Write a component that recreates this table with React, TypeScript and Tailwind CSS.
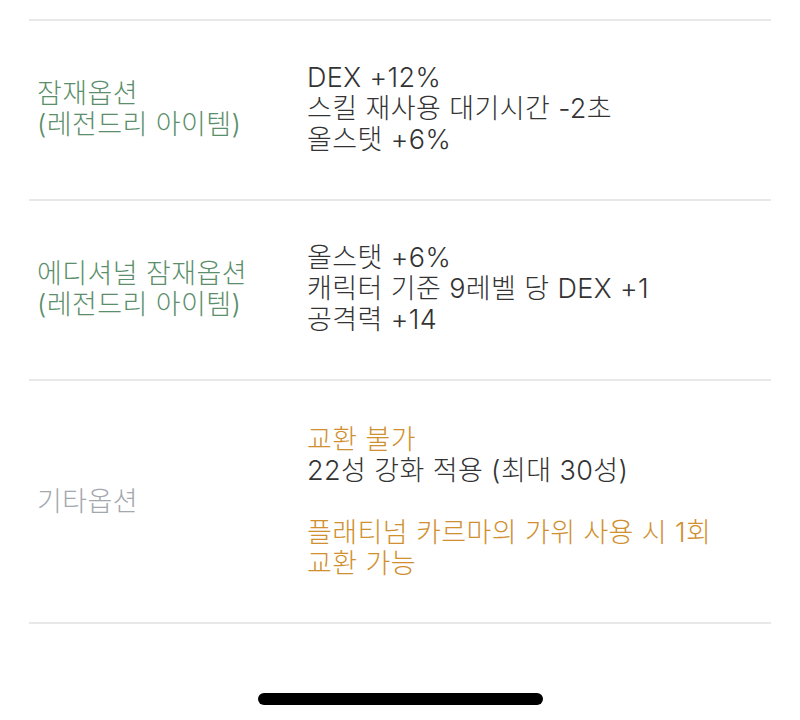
const font = {
  fontFamily: 'Inter, "Noto Sans CJK KR", sans-serif',
};

type Line = { text: string; tone?: "dark" | "gold" | "blank" };

interface Row {
  label: string[];
  labelTone: "green" | "gray";
  lines: Line[];
}

const rows: Row[] = [
  {
    label: ["잠재옵션", "(레전드리 아이템)"],
    labelTone: "green",
    lines: [
      { text: "DEX +12%" },
      { text: "스킬 재사용 대기시간 -2초" },
      { text: "올스탯 +6%" },
    ],
  },
  {
    label: ["에디셔널 잠재옵션", "(레전드리 아이템)"],
    labelTone: "green",
    lines: [
      { text: "올스탯 +6%" },
      { text: "캐릭터 기준 9레벨 당 DEX +1" },
      { text: "공격력 +14" },
    ],
  },
  {
    label: ["기타옵션"],
    labelTone: "gray",
    lines: [
      { text: "교환 불가", tone: "gold" },
      { text: "22성 강화 적용 (최대 30성)" },
      { text: "", tone: "blank" },
      { text: "플래티넘 카르마의 가위 사용 시 1회", tone: "gold" },
      { text: "교환 가능", tone: "gold" },
    ],
  },
];

export default function App() {
  return (
    <div
      className="w-[800px] h-[720px] bg-white flex flex-col text-[27px] leading-[31px] font-light tracking-[0.4px]"
      style={font}
    >
      <div className="mx-[29px] mt-[19px] border-t-2 border-[#e8e8e8]">
        {rows.map((row, i) => (
          <div
            key={i}
            className={`flex items-center border-b-2 border-[#e8e8e8] ${
              i === rows.length - 1 ? "pt-[43px] pb-[43px]" : "pt-[41px] pb-[44px]"
            }`}
          >
            <div
              className={`w-[278px] pl-2 ${
                row.labelTone === "green" ? "text-[#5b8f6b]" : "text-[#a3a7ae]"
              }`}
            >
              {row.label.map((l) => (
                <div key={l}>{l}</div>
              ))}
            </div>
            <div className="flex-1">
              {row.lines.map((line, j) =>
                line.tone === "blank" ? (
                  <div key={j} className="h-[31px]" />
                ) : (
                  <div
                    key={j}
                    className={
                      line.tone === "gold" ? "text-[#d0902f]" : "text-[#333333]"
                    }
                  >
                    {line.text}
                  </div>
                )
              )}
            </div>
          </div>
        ))}
      </div>
      <div className="flex-1 flex items-end justify-center pb-[15px]">
        <div className="w-[285px] h-[12px] rounded-full bg-black" />
      </div>
    </div>
  );
}
